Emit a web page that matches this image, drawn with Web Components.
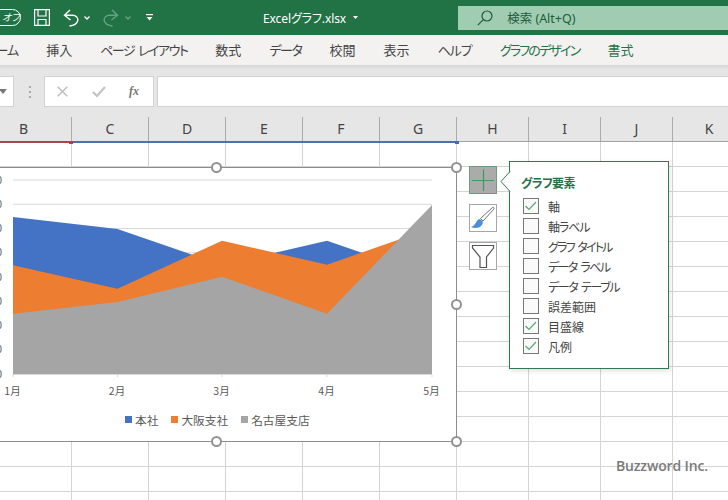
<!DOCTYPE html>
<html lang="ja">
<head>
<meta charset="utf-8">
<title>Excelグラフ</title>
<style>
  html, body { margin: 0; height: 500px; overflow: hidden; background: #fff; }
  body { font-family: "Noto Sans", "Noto Sans CJK JP", sans-serif; }
</style>
</head>
<body>
<xl-titlebar></xl-titlebar>
<xl-tabs></xl-tabs>
<xl-formula></xl-formula>
<xl-headers></xl-headers>
<xl-sheet>
  <xl-chart></xl-chart>
  <xl-tools></xl-tools>
  <xl-popover heading="グラフ要素">
    <xl-check checked>軸</xl-check>
    <xl-check style="letter-spacing:-1.1px">軸ラベル</xl-check>
    <xl-check style="letter-spacing:-1.8px;word-spacing:2.5px">グラフ タイトル</xl-check>
    <xl-check style="letter-spacing:-1.6px;word-spacing:2.5px">データ ラベル</xl-check>
    <xl-check style="letter-spacing:-1.4px;word-spacing:2.5px">データ テーブル</xl-check>
    <xl-check>誤差範囲</xl-check>
    <xl-check checked>目盛線</xl-check>
    <xl-check checked>凡例</xl-check>
  </xl-popover>
</xl-sheet>

<script>
const JP = '"Noto Sans CJK JP", sans-serif';

class Base extends HTMLElement {
  constructor() {
    super();
    this.attachShadow({ mode: 'open' });
    this.shadowRoot.innerHTML = this.markup();
  }
  markup() { return ''; }
}

class XlTitlebar extends Base {
  markup() {
    return `
    <style>
      :host { display: flex; align-items: center; height: 35px; background: #217346; color: #fff; overflow: hidden; font-family: ${JP}; font-feature-settings: "palt"; }
      svg { display: block; flex: none; fill: none; stroke: #fff; stroke-width: 1.2; }
      .pill { flex: none; box-sizing: border-box; width: 36px; height: 17px; margin: -1px 0 0 -15px; padding-left: 16px; border: 1px solid #fff; border-radius: 9px; font-size: 10px; line-height: 14px; font-style: italic; }
      .file { margin-left: 110px; width: 84px; font-size: 12px; white-space: nowrap; font-family: "Noto Sans", ${JP}; letter-spacing: -.1px; }
      .search { flex: none; display: flex; align-items: center; box-sizing: border-box; width: 271px; height: 24px; margin-left: 100px; padding-left: 19px; background: #a0cdb2; color: #1d5c3a; font-size: 12.5px; }
      .search span { margin-left: 14px; font-family: "Noto Sans", ${JP}; white-space: nowrap; }
    </style>
    <span class="pill">オフ</span>
    <svg style="margin-left:13px" width="16" height="17" viewBox="0 0 16 17"><path d="M.6.6H15.4V16.4H.6ZM4 .6V7H12V.6M4 16.4V10.5H12V16.4"/></svg>
    <svg style="margin-left:13px" width="16" height="18" viewBox="0 0 16 18"><path d="M7 1 1.500 6.200 7.500 11M1.500 6.200H9C13 6 15.500 9 14.600 12 13.800 15 10.500 16.500 6.500 17" stroke-width="1.4"/></svg>
    <svg style="margin-left:5px" width="6" height="4" viewBox="0 0 6 4"><path d="M.5.5 3 3 5.500.5" stroke-width="1.3"/></svg>
    <svg style="margin-left:13px;opacity:.32" width="16" height="18" viewBox="0 0 16 18"><path d="M9 1 14.500 6.200 8.500 11M14.500 6.200H7C3 6 .5 9 1.400 12 2.200 15 5.500 16.500 9.500 17" stroke-width="1.4"/></svg>
    <svg style="margin-left:6px;opacity:.32" width="6" height="4" viewBox="0 0 6 4"><path d="M.5.5 3 3 5.500.5" stroke-width="1.3"/></svg>
    <svg style="margin-left:15px" width="7" height="7" viewBox="0 0 7 7"><path d="M0 .6H7" stroke-width="1.2"/><path d="M.5 3H6.500L3.500 6.500Z" fill="#fff" stroke="none"/></svg>
    <span class="file">Excelグラフ.xlsx</span>
    <svg style="margin-left:7px" width="5" height="3" viewBox="0 0 5 3"><path d="M0 0H5L2.500 3Z" fill="#fff" stroke="none"/></svg>
    <div class="search">
      <svg style="stroke:#1d5c3a" width="16" height="16" viewBox="0 0 16 16"><circle cx="10" cy="6" r="5"/><path d="M6.300 9.700 .8 15.200"/></svg>
      <span>検索 (Alt+Q)</span>
    </div>`;
  }
}

class XlTabs extends Base {
  markup() {
    const tabs = [['ホーム', -1], ['挿入', 0], ['ページ レイアウト', -1.5], ['数式', 0], ['データ', -1.4], ['校閲', 0], ['表示', 0], ['ヘルプ', -1], ['グラフのデザイン', -1.8, 'design'], ['書式', 0, 'design']];
    return `
    <style>
      :host { display: flex; align-items: center; gap: 28px; height: 30px; background: #f3f2f1; color: #444; overflow: hidden; font: 13px/30px ${JP}; font-feature-settings: "palt"; white-space: nowrap; word-spacing: 2.5px; }
      span { flex: none; }
      span:first-of-type { margin-left: -16px; }
      .design { color: #217346; }
    </style>
    ${tabs.map(([t, s, c]) => `<span class="${c || ''}" style="letter-spacing:${s}px">${t}</span>`).join('')}`;
  }
}

class XlFormula extends Base {
  markup() {
    return `
    <style>
      :host { display: flex; align-items: flex-start; height: 52px; box-sizing: border-box; padding-top: 11px; background: linear-gradient(#d8d8d8, #e6e6e6 5px); }
      .box { box-sizing: border-box; height: 31px; background: #fff; border: 1px solid #d2d2d2; }
      .name { flex: none; width: 14px; margin-right: 15px; border-left: 0; position: relative; display: flex; align-items: center; }
      .name i { width: 0; height: 0; border: 4px solid transparent; border-top: 5px solid #777; border-bottom: 0; margin-left: -1px; }
      .dots { flex: none; width: 2px; height: 12px; margin: 10px 13px 0 0; background: repeating-linear-gradient(#aaa 0 2px, transparent 2px 5px); }
      .btns { flex: none; width: 110px; display: flex; align-items: center; }
      .btns > * { flex: none; }
      .fx { font: italic bold 12px "Liberation Serif", serif; color: #777; margin-left: 23px; }
      .input { flex: 1; margin-left: 3px; border-right: 0; }
      svg { display: block; fill: none; }
    </style>
    <div class="box name"><i></i></div>
    <div class="dots"></div>
    <div class="box btns">
      <svg style="margin-left:12px" width="11" height="11" viewBox="0 0 11 11"><path d="M.7.7 10.300 10.300M10.300.7 .7 10.300" stroke="#bdbdbd" stroke-width="1.400"/></svg>
      <svg style="margin-left:24px" width="14" height="11" viewBox="0 0 14 11"><path d="M1 6 5 10 13 1" stroke="#c4c4c4" stroke-width="2.200"/></svg>
      <span class="fx">fx</span>
    </div>
    <div class="box input"></div>`;
  }
}

class XlHeaders extends Base {
  markup() {
    const cols = [['B', 72], ['C', 77], ['D', 77], ['E', 77], ['F', 77], ['G', 77], ['H', 72], ['I', 72], ['J', 72], ['K', 72]];
    return `
    <style>
      :host { display: flex; height: 25px; box-sizing: border-box; background: #e6e6e6; border-bottom: 1px solid #a2a2a2; position: relative; z-index: 1; font: 14px/24px "Noto Sans", sans-serif; color: #444; }
      div { flex: none; box-sizing: border-box; text-align: center; border-right: 1px solid #ababab; }
      div:first-of-type { padding-right: 24px; }
      div:last-of-type { border-right: 0; }
      .sel { position: absolute; bottom: -2px; height: 2px; }
      .red { left: 0; width: 71px; background: #a8434f; }
      .blue { left: 72px; width: 384px; background: #4c72a9; }
      .mark { position: absolute; bottom: -3px; width: 4px; height: 3px; }
    </style>
    ${cols.map(([c, w]) => `<div style="width:${w}px">${c}</div>`).join('')}
    <i class="sel red"></i><i class="sel blue"></i>
    <i class="mark" style="left:69px;background:#a8434f"></i>
    <i class="mark" style="left:455px;background:#3f6fb5"></i>`;
  }
}

class XlSheet extends Base {
  markup() {
    const widths = [72, 77, 77, 77, 77, 77, 72, 72, 72, 72];
    let cells = '';
    for (let r = 0; r < 15; r++) for (const w of widths) cells += '<div class="cell"></div>';
    return `
    <style>
      :host { display: block; position: relative; height: 358px; overflow: hidden; background: #fff; }
      .grid { display: grid; grid-template-columns: ${widths.map(w => w + 'px').join(' ')}; grid-auto-rows: 25px; }
      .cell { box-sizing: border-box; border-right: 1px solid #d4d4d4; border-bottom: 1px solid #d4d4d4; }
      .mark { position: absolute; left: 616px; top: 313px; font: 600 14px/22px "Open Sans", sans-serif; color: #7b7b7b; letter-spacing: -.15px; white-space: nowrap; }
    </style>
    <div class="grid">${cells}</div>
    <slot></slot>
    <div class="mark">Buzzword Inc.</div>`;
  }
}

class XlChart extends Base {
  markup() {
    const xs = [13, 117.5, 222, 327, 432];
    const base = 374;
    const area = (ys, color) => `<polygon fill="${color}" points="13,${base} ${ys.map((y, i) => xs[i] + ',' + y).join(' ')} 432,${base}"/>`;
    const grid = [], labels = [];
    for (let i = 0; i < 9; i++) {
      const y = 180 + i * 24.25;
      grid.push(`<path d="M13 ${y}H432" stroke="#d9d9d9" stroke-width="1"/>`);
      labels.push(`<text x="2" y="${y + 3.5}" text-anchor="end">${400 - i * 50}</text>`);
    }
    const handles = [[216, 167], [456, 167], [456, 304], [216, 441], [456, 441]];
    return `
    <style>
      :host { display: block; position: absolute; left: -10px; top: 25px; width: 467px; height: 275px; box-sizing: border-box; background: #fff; border: 1px solid #8c8c8c; font-family: ${JP}; color: #595959; }
      svg { display: block; }
      text { font: 10.500px ${JP}; fill: #595959; }
      .legend { display: flex; align-items: center; height: 22px; padding-left: 134px; font-size: 11.700px; white-space: nowrap; }
      .legend i { flex: none; width: 7px; height: 7px; margin-right: 3px; }
      .legend span { margin-right: 13px; }
      .h { position: absolute; box-sizing: border-box; width: 11px; height: 11px; border: 2px solid #929292; border-radius: 50%; background: #fff; }
    </style>
    <svg width="465" height="240" viewBox="-9 168 465 240">
      ${grid.join('')}
      ${area([217, 229, 265, 240.7, 277], '#4472c4')}
      ${area([265.3, 288.7, 240.7, 264.7, 228], '#ed7d31')}
      ${area([313.7, 302, 276.7, 313.7, 205], '#a5a5a5')}
      <path d="M13 374.500H432M13 374.500V377M117.500 374.500V377M222 374.500V377M327 374.500V377M432 374.500V377" stroke="#d9d9d9" fill="none"/>
      ${labels.join('')}
      ${['1月', '2月', '3月', '4月', '5月'].map((t, i) => `<text x="${xs[i] - 0.5}" y="395" text-anchor="middle">${t}</text>`).join('')}
    </svg>
    <div class="legend">
      <i style="background:#4472c4"></i><span>本社</span>
      <i style="background:#ed7d31"></i><span>大阪支社</span>
      <i style="background:#a5a5a5"></i><span>名古屋支店</span>
    </div>
    ${handles.map(([x, y]) => `<b class="h" style="left:${x + 9 - 5.500}px;top:${y - 167 - 6.500}px"></b>`).join('')}`;
  }
}

class XlTools extends Base {
  markup() {
    return `
    <style>
      :host { display: flex; flex-direction: column; gap: 10px; position: absolute; left: 469px; top: 24px; }
      div { box-sizing: border-box; width: 28px; height: 28px; background: #fff; border: 1px solid #a6a6a6; }
      .on { background: #ababab; border-color: #6f9c80; }
      svg { display: block; }
    </style>
    <div class="on"><svg width="26" height="26" viewBox="0 0 26 26"><path d="M2 13.500H24M13.500 2.500V24" stroke="#3f9a5e" stroke-width="1.200" fill="none"/></svg></div>
    <div><svg width="26" height="26" viewBox="0 0 26 26">
      <path d="M22.500 2.500C24 2 24.500 3.500 23.500 4.500L13 16 10.500 13.500Z" fill="#fff" stroke="#6e6e6e"/>
      <path d="M9.500 14C7 14.500 6.500 17 5 19 4 20.500 2.500 21.500 1 22 4 23.500 9 23.500 11.500 20.500 13 18.500 13 17 12.500 16Z" fill="#4a90d9"/>
    </svg></div>
    <div><svg width="26" height="26" viewBox="0 0 26 26"><path d="M2.500 2.500H23.500V5L16.500 14V24.500H10V14L2.500 5Z" fill="#fff" stroke="#555" stroke-width="1.200"/></svg></div>`;
  }
}

class XlPopover extends Base {
  markup() {
    return `
    <style>
      :host { display: block; position: absolute; left: 509px; top: 19px; width: 160px; height: 208px; box-sizing: border-box; padding: 11px 0 0 11px; background: #fff; border: 1px solid #2f7a55; box-shadow: 1px 2px 5px rgba(0,0,0,.12); font-family: ${JP}; font-feature-settings: "palt"; }
      h2 { margin: 0 0 3px; font-size: 12px; line-height: 20px; font-weight: 700; letter-spacing: -.6px; color: #217346; }
      .list { display: flex; flex-direction: column; }
      svg { position: absolute; left: -10px; top: 9px; }
    </style>
    <svg width="11" height="21" viewBox="0 0 11 21"><path d="M10 .5 1 10.500 10 20.500" fill="#fff" stroke="#2f7a55"/><path d="M10 1V20H11V1Z" fill="#fff"/></svg>
    <h2>${this.getAttribute('heading')}</h2>
    <div class="list"><slot></slot></div>`;
  }
}

class XlCheck extends Base {
  markup() {
    const on = this.hasAttribute('checked');
    return `
    <style>
      :host { display: flex; align-items: center; height: 20px; padding-left: 2px; font-size: 12px; color: #444; font-feature-settings: "palt"; white-space: nowrap; }
      .box { flex: none; box-sizing: border-box; width: 16px; height: 16px; margin-right: 9px; background: #fafafa; border: 1px solid #777; letter-spacing: 0; }
      svg { display: block; }
    </style>
    <div class="box">${on ? '<svg width="14" height="14" viewBox="0 0 14 14"><path d="M1.500 7 5 10.500 12 3" fill="none" stroke="#55a872" stroke-width="1.200"/></svg>' : ''}</div>
    <slot></slot>`;
  }
}

customElements.define('xl-titlebar', XlTitlebar);
customElements.define('xl-tabs', XlTabs);
customElements.define('xl-formula', XlFormula);
customElements.define('xl-headers', XlHeaders);
customElements.define('xl-sheet', XlSheet);
customElements.define('xl-chart', XlChart);
customElements.define('xl-tools', XlTools);
customElements.define('xl-popover', XlPopover);
customElements.define('xl-check', XlCheck);
</script>
</body>
</html>
